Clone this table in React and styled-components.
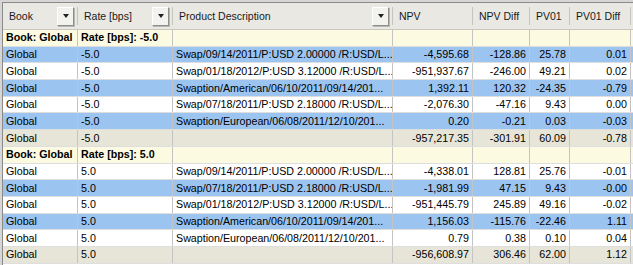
import React from "react";
import styled, { createGlobalStyle } from "styled-components";

const Global = createGlobalStyle`
  html, body { margin: 0; padding: 0; background: #ffffff; }
  body { font-family: "Liberation Sans", Arial, sans-serif; font-size: 10.7px; color: #000; }
`;

const COLS = "75px 95px 220px 80px 57px 40px 61px 1fr";

const Frame = styled.div`
  width: 633px;
  height: 265px;
  overflow: hidden;
  background: #d6d6d6;
  padding: 2px 0 0 2px;
  box-sizing: border-box;
`;

const Grid = styled.div`
  border-top: 1px solid #8a8a8a;
  border-left: 1px solid #8a8a8a;
  background: #fff;
  height: 100%;
`;

const Row = styled.div`
  display: grid;
  grid-template-columns: ${COLS};
  height: ${(p) => p.$h || "16.7px"};
  box-sizing: border-box;
  background: ${(p) =>
    p.$kind === "blue"
      ? "#9cc4f1"
      : p.$kind === "total"
      ? "#e7e5d7"
      : p.$kind === "group"
      ? "#fcfbe2"
      : p.$kind === "head"
      ? "#e9e8e3"
      : "#ffffff"};
  font-weight: ${(p) => (p.$kind === "group" ? "bold" : "normal")};
  border-bottom: 1px solid ${(p) => (p.$kind === "head" ? "#c9c8c0" : "#dedede")};
`;

const Cell = styled.div`
  display: flex;
  align-items: center;
  justify-content: ${(p) => (p.$num ? "flex-end" : "flex-start")};
  padding: ${(p) => (p.$num ? "0 3px 0 2px" : "0 1px 0 3px")};
  border-right: 1px solid #c4c4c4;
  white-space: nowrap;
  overflow: hidden;
  box-sizing: border-box;
  line-height: 1;
`;

const HeadCell = styled.div`
  position: relative;
  display: flex;
  align-items: center;
  justify-content: space-between;
  padding: 0 4px 0 6px;
  white-space: nowrap;
  overflow: hidden;
  box-sizing: border-box;
  color: #1a1a1a;
  font-size: 10.5px;
  &::after {
    content: "";
    position: absolute;
    right: 0;
    top: 4px;
    bottom: 4px;
    width: 1px;
    background: #c6c5bd;
    box-shadow: 1px 0 0 #ffffff;
  }
`;

const DropBtn = styled.div`
  width: 17px;
  height: 19px;
  box-sizing: border-box;
  background: #f2f2ee;
  border-top: 1px solid #ffffff;
  border-left: 1px solid #ffffff;
  border-right: 1px solid #8e8e8a;
  border-bottom: 1px solid #8e8e8a;
  box-shadow: 1px 1px 0 #b8b8b2;
  display: flex;
  align-items: center;
  justify-content: center;
  &::before {
    content: "";
    width: 0;
    height: 0;
    border-left: 3.5px solid transparent;
    border-right: 3.5px solid transparent;
    border-top: 4px solid #222;
  }
`;

const headers = [
  { t: "Book", btn: true },
  { t: "Rate [bps]", btn: true },
  { t: "Product Description", btn: true },
  { t: "NPV" },
  { t: "NPV Diff" },
  { t: "PV01" },
  { t: "PV01 Diff" },
  { t: "" },
];

const rows = [
  { k: "group", g: ["Book: Global", "Rate [bps]: -5.0"] },
  { k: "blue", r: "-5.0", p: "Swap/09/14/2011/P:USD 2.00000 /R:USD/L...", v: ["-4,595.68", "-128.86", "25.78", "0.01"] },
  { k: "white", r: "-5.0", p: "Swap/01/18/2012/P:USD 3.12000 /R:USD/L...", v: ["-951,937.67", "-246.00", "49.21", "0.02"] },
  { k: "blue", r: "-5.0", p: "Swaption/American/06/10/2011/09/14/201...", v: ["1,392.11", "120.32", "-24.35", "-0.79"] },
  { k: "white", r: "-5.0", p: "Swap/07/18/2011/P:USD 2.18000 /R:USD/L...", v: ["-2,076.30", "-47.16", "9.43", "0.00"] },
  { k: "blue", r: "-5.0", p: "Swaption/European/06/08/2011/12/10/201...", v: ["0.20", "-0.21", "0.03", "-0.03"] },
  { k: "total", r: "-5.0", p: "", v: ["-957,217.35", "-301.91", "60.09", "-0.78"] },
  { k: "group", g: ["Book: Global", "Rate [bps]: 5.0"] },
  { k: "white", r: "5.0", p: "Swap/09/14/2011/P:USD 2.00000 /R:USD/L...", v: ["-4,338.01", "128.81", "25.76", "-0.01"] },
  { k: "blue", r: "5.0", p: "Swap/07/18/2011/P:USD 2.18000 /R:USD/L...", v: ["-1,981.99", "47.15", "9.43", "-0.00"] },
  { k: "white", r: "5.0", p: "Swap/01/18/2012/P:USD 3.12000 /R:USD/L...", v: ["-951,445.79", "245.89", "49.16", "-0.02"] },
  { k: "blue", r: "5.0", p: "Swaption/American/06/10/2011/09/14/201...", v: ["1,156.03", "-115.76", "-22.46", "1.11"] },
  { k: "white", r: "5.0", p: "Swaption/European/06/08/2011/12/10/201...", v: ["0.79", "0.38", "0.10", "0.04"] },
  { k: "total", r: "5.0", p: "", v: ["-956,608.97", "306.46", "62.00", "1.12"] },
];

export default function App() {
  return (
    <>
      <Global />
      <Frame>
        <Grid>
          <Row $kind="head" $h="27px">
            {headers.map((h, i) => (
              <HeadCell key={i}>
                <span>{h.t}</span>
                {h.btn && <DropBtn />}
              </HeadCell>
            ))}
          </Row>
          {rows.map((r, i) =>
            r.k === "group" ? (
              <Row key={i} $kind="group">
                <Cell>{r.g[0]}</Cell>
                <Cell>{r.g[1]}</Cell>
                <Cell />
                <Cell />
                <Cell />
                <Cell />
                <Cell />
                <Cell />
              </Row>
            ) : (
              <Row key={i} $kind={r.k}>
                <Cell>Global</Cell>
                <Cell>{r.r}</Cell>
                <Cell>{r.p}</Cell>
                {r.v.map((v, j) => (
                  <Cell key={j} $num>
                    {v}
                  </Cell>
                ))}
                <Cell />
              </Row>
            )
          )}
        </Grid>
      </Frame>
    </>
  );
}
